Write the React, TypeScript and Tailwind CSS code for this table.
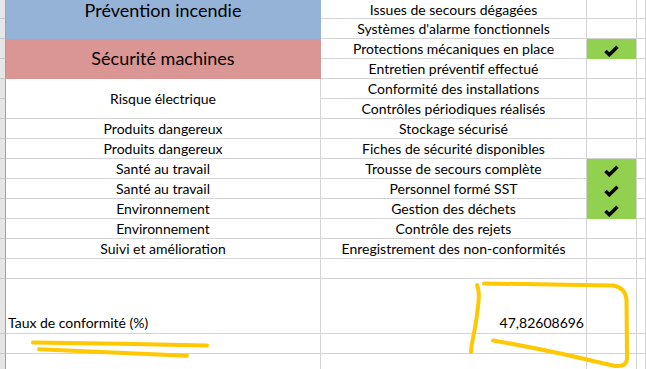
import React from "react";

type Row = {
  task: string;
  done?: boolean;
};

const rows: Row[] = [
  { task: "Issues de secours dégagées" },
  { task: "Systèmes d'alarme fonctionnels" },
  { task: "Protections mécaniques en place", done: true },
  { task: "Entretien préventif effectué" },
  { task: "Conformité des installations" },
  { task: "Contrôles périodiques réalisés" },
  { task: "Stockage sécurisé" },
  { task: "Fiches de sécurité disponibles" },
  { task: "Trousse de secours complète", done: true },
  { task: "Personnel formé SST", done: true },
  { task: "Gestion des déchets", done: true },
  { task: "Contrôle des rejets" },
  { task: "Enregistrement des non-conformités" },
];

// column A: merged category cells
const categories: { label: string; span: number; fill?: string; big?: boolean }[] = [
  { label: "Prévention incendie", span: 2, fill: "bg-[#95b3d7]", big: true },
  { label: "Sécurité machines", span: 2, fill: "bg-[#da9694]", big: true },
  { label: "Risque électrique", span: 2 },
  { label: "Produits dangereux", span: 1 },
  { label: "Produits dangereux", span: 1 },
  { label: "Santé au travail", span: 1 },
  { label: "Santé au travail", span: 1 },
  { label: "Environnement", span: 1 },
  { label: "Environnement", span: 1 },
  { label: "Suivi et amélioration", span: 1 },
];

function Check() {
  return (
    <svg width="15" height="12" viewBox="0 0 15 12" className="mt-[4px]">
      <path d="M1.5 6 L5.3 9.8 L13.5 1.8" fill="none" stroke="#000" strokeWidth="3.4" strokeLinejoin="miter" />
    </svg>
  );
}

function Scribbles() {
  return (
    <svg className="pointer-events-none absolute left-0 top-0" width="646" height="369" viewBox="0 0 646 369">
      <g fill="none" stroke="#ffc800" strokeWidth="4" strokeLinecap="round" strokeLinejoin="round">
        <path d="M33 342.5 Q120 343.3 207 345.5" />
        <path d="M39 349.3 C70 351 120 353 187 355.7" />
        <path d="M477 285 C480 292 479 300 476.5 318 S471 345 471 352" />
        <path d="M484 283.5 L613 285.5 C621 287 626 291 626.5 300 L627 359 C626.5 364.5 622 366.5 616 366 C600 363 560 352 493 340.5" />
      </g>
    </svg>
  );
}

export default function App() {
  const cell = "border-b border-r border-[#d4d4d4]";
  return (
    <div className="relative h-[369px] w-[646px] overflow-hidden bg-white font-['Lato',sans-serif] text-[14px] text-black">
      <div className="grid grid-cols-[6px_315px_266px_50px_1fr] grid-rows-[19px_repeat(13,20px)_55px_20px_20px]">
        {/* row header strip */}
        {Array.from({ length: 17 }, (_, i) => (
          <div
            key={`h${i}`}
            style={{ gridRow: i + 1 }}
            className="col-start-1 border-b border-r border-b-[#c6c6c6] border-r-[#a0a0a0] bg-[#e6e6e6]"
          />
        ))}

        {/* column A */}
        {(() => {
          let r = 1;
          return categories.map((c, i) => {
            const start = r;
            r += c.span;
            const top = c.big && i === 0;
            return (
              <div
                key={`a${i}`}
                style={{ gridRow: `${start} / span ${c.span}` }}
                className={`col-start-2 flex justify-center ${top ? "items-start pt-[1px] leading-[18px]" : "items-center"} ${c.fill ? `${c.fill} border-b border-r border-transparent` : cell} ${c.big ? "text-[18px]" : ""}`}
              >
                <span>{c.label}</span>
              </div>
            );
          });
        })()}
        <div className={`col-start-2 row-start-14 ${cell}`} />
        <div className={`col-start-2 row-start-15 flex items-end px-[2px] ${cell}`}>Taux de conformité (%)</div>
        <div className={`col-start-2 row-start-16 ${cell}`} />
        <div className={`col-start-2 row-start-17 ${cell}`} />

        {/* columns B, C, D */}
        {rows.map((row, i) => (
          <React.Fragment key={`b${i}`}>
            <div style={{ gridRow: i + 1 }} className={`col-start-3 flex items-center justify-center ${cell}`}>
              {row.task}
            </div>
            <div
              style={{ gridRow: i + 1 }}
              className={`col-start-4 flex items-center justify-center ${row.done ? "border-r border-[#d4d4d4] bg-[#92d050]" : cell}`}
            >
              {row.done ? <Check /> : null}
            </div>
            <div style={{ gridRow: i + 1 }} className={`col-start-5 ${cell}`} />
          </React.Fragment>
        ))}
        {[14, 15, 16, 17].map((r) => (
          <React.Fragment key={`e${r}`}>
            <div style={{ gridRow: r }} className={`col-start-3 flex items-end justify-end px-[2px] ${cell}`}>
              {r === 15 ? "47,82608696" : null}
            </div>
            <div style={{ gridRow: r }} className={`col-start-4 ${cell}`} />
            <div style={{ gridRow: r }} className={`col-start-5 ${cell}`} />
          </React.Fragment>
        ))}
      </div>
      <Scribbles />
    </div>
  );
}
